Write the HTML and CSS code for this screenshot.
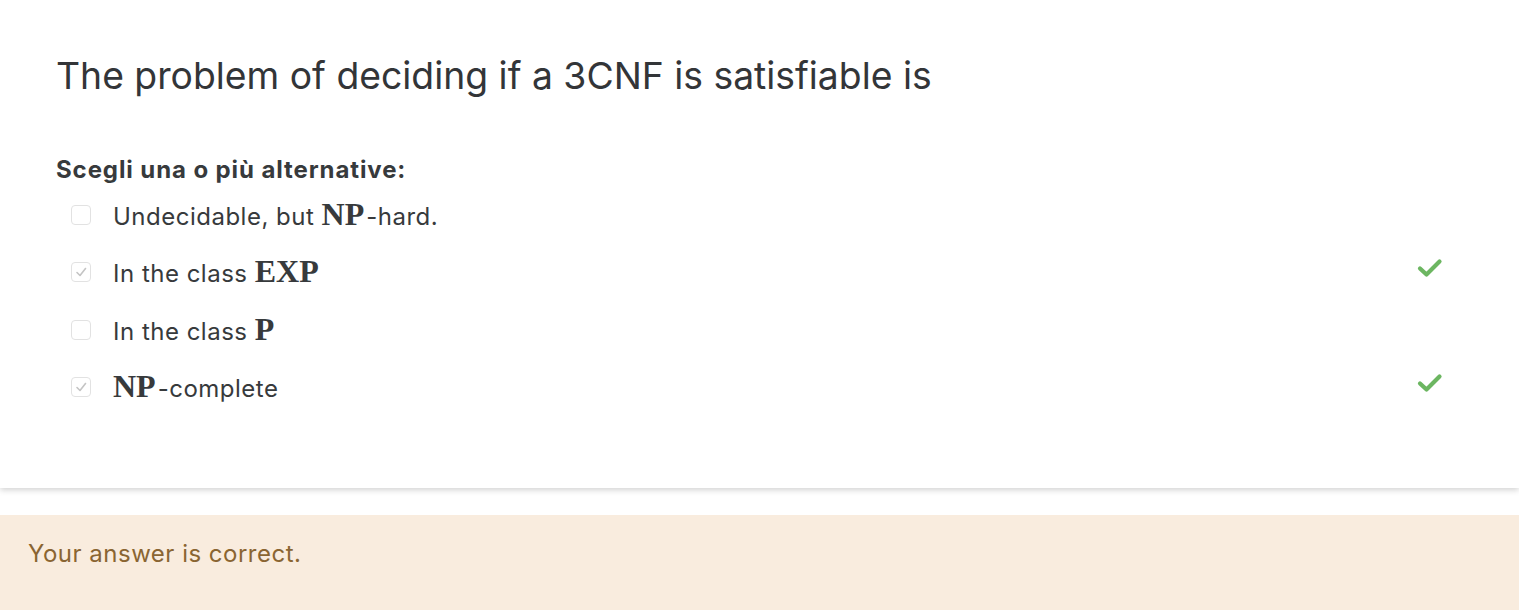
FILE: index.html
```html
<!DOCTYPE html>
<html>
<head>
<meta charset="utf-8">
<link rel="stylesheet" href="styles.css">
</head>
<body>
<div class="card">
  <h1 class="qtext">The problem of deciding if a 3CNF is satisfiable is</h1>
  <div class="prompt">Scegli una o più alternative:</div>
  <div class="answers">
    <div class="option">
      <span class="box"></span>
      <span class="label">Undecidable, but <span class="math">NP</span>-hard.</span>
    </div>
    <div class="option">
      <span class="box checked"><svg viewBox="0 0 20 20" width="20" height="20"><path d="M6 10.5 L9 13.5 L14.5 6.5" fill="none" stroke="#c4c4c4" stroke-width="1.6" stroke-linecap="round" stroke-linejoin="round"/></svg></span>
      <span class="label">In the class <span class="math">EXP</span></span>
      <svg class="ok" viewBox="0 0 26 20" width="26" height="20"><path d="M3 10.5 L9.5 16.5 L22.5 3.5" fill="none" stroke="#6cb661" stroke-width="4.2" stroke-linecap="round" stroke-linejoin="round"/></svg>
    </div>
    <div class="option">
      <span class="box"></span>
      <span class="label">In the class <span class="math">P</span></span>
    </div>
    <div class="option">
      <span class="box checked"><svg viewBox="0 0 20 20" width="20" height="20"><path d="M6 10.5 L9 13.5 L14.5 6.5" fill="none" stroke="#c4c4c4" stroke-width="1.6" stroke-linecap="round" stroke-linejoin="round"/></svg></span>
      <span class="label"><span class="math">NP</span>-complete</span>
      <svg class="ok" viewBox="0 0 26 20" width="26" height="20"><path d="M3 10.5 L9.5 16.5 L22.5 3.5" fill="none" stroke="#6cb661" stroke-width="4.2" stroke-linecap="round" stroke-linejoin="round"/></svg>
    </div>
  </div>
</div>
<div class="feedback">Your answer is correct.</div>
</body>
</html>
```
FILE: styles.css
```css
* { box-sizing: border-box; }
html, body { margin: 0; padding: 0; background: #fff; }
body {
  font-family: Inter, "Noto Sans", "Liberation Sans", sans-serif;
  color: #373a3c;
  width: 1519px;
  height: 610px;
  overflow: hidden;
}
.card {
  height: 488px;
  padding: 52px 56px 0 56px;
  background: #fff;
  box-shadow: 0 2px 6px rgba(0,0,0,0.18);
  position: relative;
  z-index: 1;
}
.qtext {
  margin: 0;
  font-weight: 400;
  font-size: 37.3px;
  line-height: 48px;
  color: #333538;
}
.prompt {
  margin-top: 55px;
  font-weight: 700;
  font-size: 24px;
  line-height: 30px;
  letter-spacing: 0.9px;
  color: #373a3c;
}
.answers {
  display: flex;
  flex-direction: column;
  margin-top: 1px;
}
.option {
  display: flex;
  align-items: center;
  height: 57.5px;
  padding-left: 15px;
  padding-right: 20px;
}
.box {
  width: 20px;
  height: 20px;
  border: 1px solid #e2e2e2;
  border-radius: 4px;
  background: #fff;
  flex: none;
  display: flex;
}
.box svg { margin: -1px; }
.label {
  margin-left: 22px;
  font-size: 24px;
  line-height: 30px;
  letter-spacing: 0.5px;
  color: #373a3c;
  flex: 1;
}
.math {
  font-family: "Liberation Serif", "DejaVu Serif", serif;
  font-weight: 700;
  font-size: 32px;
  line-height: 1;
  letter-spacing: 0;
  margin-right: 2px;
}
.ok { flex: none; margin-top: -8px; }
.feedback {
  margin-top: 27px;
  height: 95px;
  background: #f9ecde;
  color: #8a6532;
  font-size: 24px;
  letter-spacing: 0.5px;
  padding: 24px 28px;
  line-height: 30px;
}
```
